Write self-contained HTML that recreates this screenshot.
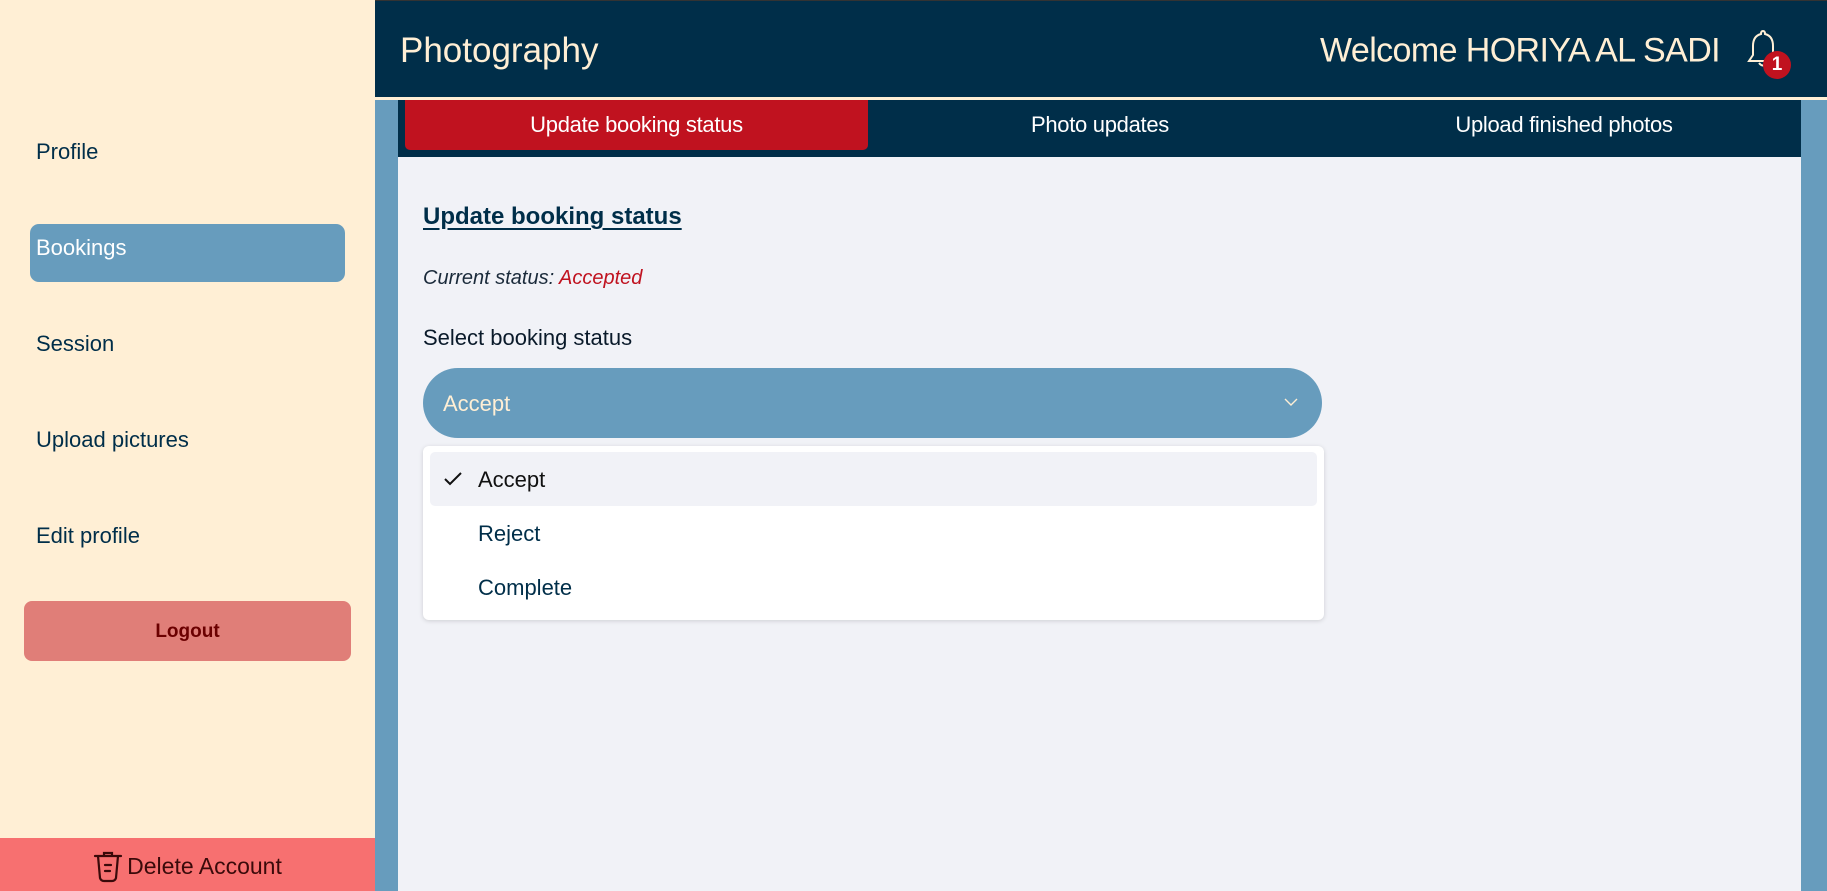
<!DOCTYPE html>
<html><head><meta charset="utf-8"><style>
*{box-sizing:border-box;margin:0;padding:0}
body{width:1827px;height:891px;overflow:hidden;font-family:"Liberation Sans",sans-serif;background:#f1f2f7;position:relative}
.side{position:absolute;left:0;top:0;width:375px;height:891px;background:#ffefd5}
.nav{position:absolute;left:36px;font-size:22px;color:#002e49;transform:translateY(-50%)}
.active{position:absolute;left:30px;top:224px;width:315px;height:58px;background:#679cbd;border-radius:9px}
.logout{position:absolute;left:24px;top:601px;width:327px;height:60px;background:#e07e78;border-radius:8px;color:#6b0000;font-weight:bold;font-size:19px;text-align:center;line-height:62px}
.del{position:absolute;left:0;top:838px;width:375px;height:53px;background:#f77070;color:#3a0a0a;font-size:23px;display:flex;align-items:center;justify-content:center;gap:4px;padding-top:4px}
.hdr{position:absolute;left:375px;top:0;width:1452px;height:97px;background:#002e49;border-top:1px solid #333}
.line{position:absolute;left:375px;top:97px;width:1452px;height:3px;background:#ffefd5}
.gl{position:absolute;left:375px;top:100px;width:23px;height:791px;background:#679cbd}
.gr{position:absolute;left:1801px;top:100px;width:26px;height:791px;background:#679cbd}
.tabs{position:absolute;left:398px;top:100px;width:1403px;height:57px;background:#002e49}
.tab{position:absolute;top:100px;height:50px;line-height:50px;text-align:center;color:#fff;font-size:22px;letter-spacing:-0.3px}
</style></head><body>
<div class="side">
<div class="active"></div>
<div class="nav" style="top:152px">Profile</div>
<div class="nav" style="top:248px;color:#fff">Bookings</div>
<div class="nav" style="top:344px">Session</div>
<div class="nav" style="top:440px">Upload pictures</div>
<div class="nav" style="top:536px">Edit profile</div>
<div class="logout">Logout</div>
<div class="del"><svg width="30" height="34" viewBox="0 0 30 34" fill="none" stroke="#3a0a0a" stroke-width="2.2" stroke-linecap="round"><path d="M2 6h26M11 6V3h8v3M5 6l2 22q1 3 4 3h8q3 0 4-3l2-22M12 15h6M12 21h5"/></svg>Delete Account</div>
</div>
<div class="hdr">
<div style="position:absolute;left:25px;top:50px;transform:translateY(-50%);font-size:35px;color:#ffefd5">Photography</div>
<div style="position:absolute;right:107px;top:50px;transform:translateY(-50%);font-size:34px;letter-spacing:-0.6px;color:#ffefd5">Welcome HORIYA AL SADI</div>
<svg style="position:absolute;left:1370px;top:26px" width="36" height="46" viewBox="0 0 36 46" fill="none" stroke="#ffefd5" stroke-width="2"><path d="M18 4q-2 0-2 3q-8 2-8 12v9l-4 6h28l-4-6v-9q0-10-8-12q0-3-2-3M14 36q4 5 8 0"/></svg>
<div style="position:absolute;left:1388px;top:50px;width:28px;height:28px;border-radius:50%;background:#c0121f;color:#fff;font-weight:bold;font-size:19px;text-align:center;line-height:28px">1</div>
</div>
<div class="line"></div>
<div class="gl"></div><div class="gr"></div>
<div class="tabs"></div>
<div class="tab" style="left:405px;width:463px;background:#c0121f;border-radius:0 0 5px 5px">Update booking status</div>
<div class="tab" style="left:868px;width:464px">Photo updates</div>
<div class="tab" style="left:1332px;width:464px">Upload finished photos</div>
<div style="position:absolute;left:423px;top:203px;font-size:24px;font-weight:bold;color:#002e49;text-decoration:underline;text-underline-offset:4px">Update booking status</div>
<div style="position:absolute;left:423px;top:267px;font-size:20px;font-style:italic;color:#1a2a3a">Current status: <span style="color:#c0121f">Accepted</span></div>
<div style="position:absolute;left:423px;top:325px;font-size:22px;color:#0a1a2a">Select booking status</div>
<div style="position:absolute;left:423px;top:368px;width:899px;height:70px;border-radius:35px;background:#679cbd;color:#ffefd5;font-size:22px;line-height:72px;padding-left:20px">Accept
<svg style="position:absolute;right:24px;top:30px" width="14" height="9" viewBox="0 0 14 9" fill="none" stroke="#ffefd5" stroke-width="1.4"><path d="M1 1l6 6 6-6"/></svg></div>
<div style="position:absolute;left:423px;top:446px;width:901px;height:174px;background:#fff;border-radius:6px;box-shadow:0 1px 5px rgba(0,0,0,.15)">
<div style="position:absolute;left:7px;top:6px;width:887px;height:54px;background:#f1f2f7;border-radius:5px"></div>
<svg style="position:absolute;left:21px;top:26px" width="18" height="14" viewBox="0 0 18 14" fill="none" stroke="#111" stroke-width="2"><path d="M1 7l5 5L17 1"/></svg>
<div style="position:absolute;left:55px;top:34px;transform:translateY(-50%);font-size:22px;color:#111">Accept</div>
<div style="position:absolute;left:55px;top:88px;transform:translateY(-50%);font-size:22px;color:#002e49">Reject</div>
<div style="position:absolute;left:55px;top:142px;transform:translateY(-50%);font-size:22px;color:#002e49">Complete</div>
</div>
</body></html>
